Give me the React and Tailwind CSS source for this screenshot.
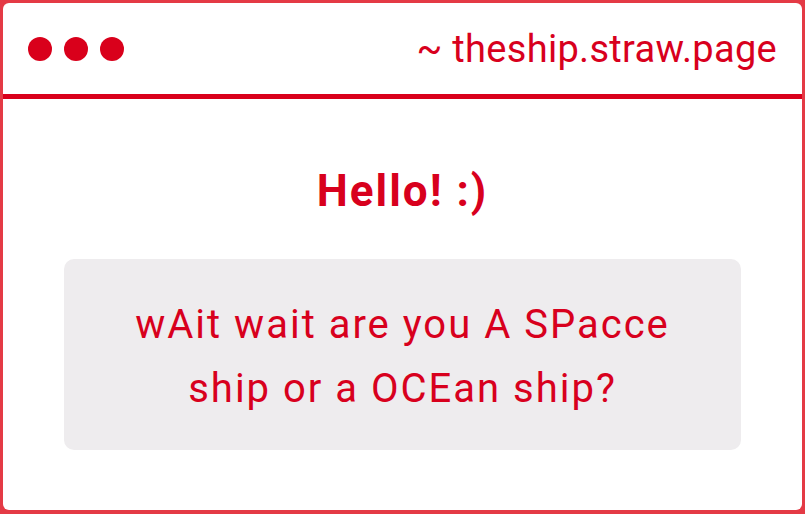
import React from 'react'

const RED = 'text-[#d8001d]'

export default function App() {
  return (
    <div className="w-[805px] h-[514px] bg-[#e43a45] pt-[3px] px-[3px] pb-[4px] font-['Roboto',sans-serif]">
      <div className="h-full bg-white rounded-[6px] flex flex-col">
        {/* title bar */}
        <div className="h-[96px] shrink-0 flex items-center justify-between px-[25px] border-b-[5px] border-[#d9001b]">
          <div className="flex gap-[12px]">
            <span className="w-[24px] h-[24px] rounded-full bg-[#d9001b]" />
            <span className="w-[24px] h-[24px] rounded-full bg-[#d9001b]" />
            <span className="w-[24px] h-[24px] rounded-full bg-[#d9001b]" />
          </div>
          <p className={`${RED} text-[38px] leading-none tracking-[0.3px]`}>~ theship.straw.page</p>
        </div>

        {/* content */}
        <div className="flex flex-col items-center pt-[68px] px-[61px]">
          <h1 className={`${RED} text-[44px] leading-[48px] font-bold tracking-[2px]`}>Hello! :)</h1>
          <div className="mt-[44px] w-full h-[191px] bg-[#eeecee] rounded-[10px] flex items-center justify-center pt-[4px]">
            <p className={`${RED} text-[40px] leading-[64px] tracking-[2px] text-center`}>
              wAit wait are you A SPacce
              <br />
              ship or a OCEan ship?
            </p>
          </div>
        </div>
      </div>
    </div>
  )
}
